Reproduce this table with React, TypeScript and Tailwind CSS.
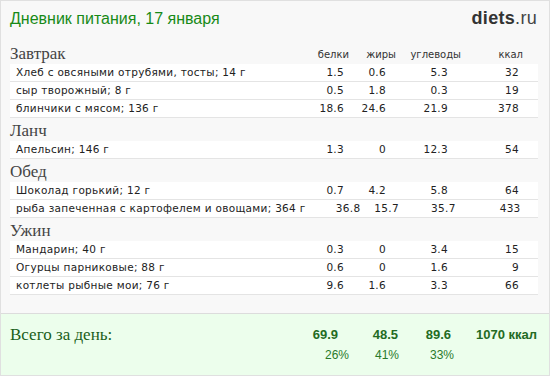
const meals = [
  {
    title: "Завтрак",
    items: [
      ["Хлеб с овсяными отрубями, тосты; 14 г", "1.5", "0.6", "5.3", "32"],
      ["сыр творожный; 8 г", "0.5", "1.8", "0.3", "19"],
      ["блинчики с мясом; 136 г", "18.6", "24.6", "21.9", "378"],
    ],
  },
  { title: "Ланч", items: [["Апельсин; 146 г", "1.3", "0", "12.3", "54"]] },
  {
    title: "Обед",
    items: [
      ["Шоколад горький; 12 г", "0.7", "4.2", "5.8", "64"],
      ["рыба запеченная с картофелем и овощами; 364 г", "36.8", "15.7", "35.7", "433"],
    ],
  },
  {
    title: "Ужин",
    items: [
      ["Мандарин; 40 г", "0.3", "0", "3.4", "15"],
      ["Огурцы парниковые; 88 г", "0.6", "0", "1.6", "9"],
      ["котлеты рыбные мои; 76 г", "9.6", "1.6", "3.3", "66"],
    ],
  },
];

const body = "font-['DejaVu_Sans',Verdana,sans-serif]";
const serif = "font-['Liberation_Serif','Times_New_Roman',serif]";
const arial = "font-['Liberation_Sans',Arial,sans-serif]";

function Row({ cells }: { cells: string[] }) {
  const [name, p, f, c, kcal] = cells;
  return (
    <div className={`flex h-[18px] items-center bg-white border-b border-[#e4e4e4] text-[10.5px] tracking-[0.3px] text-[#222] ${body}`}>
      <span className="flex-1 pl-[6px] whitespace-nowrap">{name}</span>
      <span className="w-[60px] text-right">{p}</span>
      <span className="w-[42px] text-right">{f}</span>
      <span className="w-[62px] text-right">{c}</span>
      <span className="w-[71px] text-right">{kcal}</span>
      <span className="w-[19px]" />
    </div>
  );
}

export default function App() {
  return (
    <div className="w-[550px] h-[376px] border border-[#e0e0e0] bg-[#f8f8f8] flex flex-col overflow-hidden">
      <div className="flex items-center justify-between h-[34px] pl-[9px] pr-[12px] pt-[1px]">
        <h1 className={`text-[16px] text-[#178a17] ${arial}`}>Дневник питания, 17 января</h1>
        <div className={`${arial} text-[18px] text-[#333] tracking-[0.3px]`}>
          <span className="font-bold">diets</span>
          <span className="text-[#444]">.ru</span>
        </div>
      </div>

      <div className="flex flex-col gap-[3px] pl-[9px] pr-[11px] pt-[9px]">
        {meals.map((meal, i) => (
          <div key={meal.title}>
            <div className="flex items-center h-[20px]">
              <span className={`flex-1 text-[17px] text-[#444] ${serif}`}>{meal.title}</span>
              {i === 0 && (
                <div className={`flex text-[10px] text-[#333] ${body}`}>
                  <span className="w-[60px] text-right">белки</span>
                  <span className="w-[47px] text-right">жиры</span>
                  <span className="w-[65px] text-right">углеводы</span>
                  <span className="w-[62px] text-right">ккал</span>
                  <span className="w-[15px]" />
                </div>
              )}
            </div>
            {meal.items.map((it) => (
              <Row key={it[0]} cells={it} />
            ))}
          </div>
        ))}
      </div>

      <div className="mt-auto h-[62px] bg-[#ecfeec] border-t border-[#dcdcdc] pl-[9px] pr-[11px] pt-[11px]">
        <div className="flex items-center h-[20px]">
          <span className={`flex-1 text-[17px] text-[#1a5e1a] ${serif}`}>Всего за день:</span>
          <div className={`flex ${arial} font-bold text-[13px] text-[#236b23]`}>
            <span className="w-[40px] text-right">69.9</span>
            <span className="w-[60px] text-right">48.5</span>
            <span className="w-[53px] text-right">89.6</span>
            <span className="w-[86px] text-right">1070 ккал</span>
            <span className="w-[1px]" />
          </div>
        </div>
        <div className={`flex h-[20px] items-center ${arial} text-[12px] text-[#2a7a2a]`}>
          <span className="flex-1" />
          <span className="w-[50px] text-right">26%</span>
          <span className="w-[50px] text-right">41%</span>
          <span className="w-[55px] text-right">33%</span>
          <span className="w-[84px]" />
        </div>
      </div>
    </div>
  );
}
